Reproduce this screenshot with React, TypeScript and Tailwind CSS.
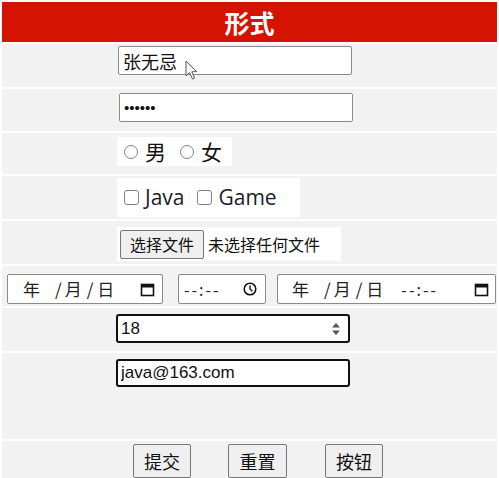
import { ChangeEvent, useState } from "react";

const cjk = '"Noto Sans CJK SC", "Liberation Sans", sans-serif';

function CalendarIcon() {
  return (
    <svg width="15" height="15" viewBox="0 0 15 15" className="shrink-0">
      <rect x="1.5" y="2.5" width="12" height="11" fill="none" stroke="#111" strokeWidth="1.6" />
      <rect x="1.5" y="2.5" width="12" height="3" fill="#111" />
    </svg>
  );
}

function ClockIcon() {
  return (
    <svg width="14" height="14" viewBox="0 0 14 14" className="shrink-0">
      <circle cx="7" cy="7" r="5.8" fill="none" stroke="#111" strokeWidth="1.5" />
      <path d="M7 3.6 V7 L9.4 9.2" fill="none" stroke="#111" strokeWidth="1.4" />
    </svg>
  );
}

function DateParts() {
  return (
    <span className="flex items-center text-[17px] text-[#222]">
      <span>年</span>
      <span className="ml-[15px]">/</span>
      <span className="ml-[3px]">月</span>
      <span className="ml-[5px]">/</span>
      <span className="ml-[4px]">日</span>
    </span>
  );
}

export default function App() {
  const [name, setName] = useState("张无忌");
  const [pwd, setPwd] = useState("123456");
  const [age, setAge] = useState("18");
  const [email, setEmail] = useState("java@163.com");

  const onText = (set: (v: string) => void) => (e: ChangeEvent<HTMLInputElement>) =>
    set(e.target.value);

  return (
    <div
      className="min-h-[478px] bg-white px-[2px] pt-[2px] flex flex-col gap-[2px] overflow-hidden"
      style={{ fontFamily: cjk }}
    >
      <div className="h-[40px] bg-[#d41300] flex items-center justify-center">
        <h1 className="text-[25px] font-bold text-white leading-none">形式</h1>
      </div>

      {/* name */}
      <div className="h-[43px] bg-[#f2f2f2] pl-[116px] pt-[2px] relative">
        <input
          type="text"
          value={name}
          onChange={onText(setName)}
          className="w-[234px] h-[29px] bg-white border border-[#8a8a8a] rounded-[2px] px-[4px] text-[18px] text-[#111] outline-none"
        />
        <svg width="13" height="20" viewBox="0 0 13 20" className="absolute left-[183px] top-[16px]">
          <path d="M1 1 V16 L4.5 12.5 L7.5 19 L9.6 18 L6.8 11.8 L11.6 11.6 Z" fill="#fff" stroke="#555" strokeWidth="1" />
        </svg>
      </div>

      {/* password */}
      <div className="h-[42px] bg-[#f2f2f2] pl-[117px] pt-[4px]">
        <input
          type="password"
          value={pwd}
          onChange={onText(setPwd)}
          className="w-[234px] h-[29px] bg-white border border-[#8a8a8a] rounded-[2px] px-[4px] text-[15px] text-[#111] outline-none"
          style={{ fontFamily: '"Liberation Sans", sans-serif' }}
        />
      </div>

      {/* gender */}
      <div className="h-[41px] bg-[#f2f2f2] pl-[115px] pt-[4px]">
        <div className="inline-flex items-center h-[29px] w-[115px] bg-white pl-[7px] text-[21px] text-[#111]">
          <label className="flex items-center">
            <input
              type="radio"
              name="sex"
              className="appearance-none shrink-0 w-[14px] h-[14px] m-0 mr-[7px] rounded-full border border-[#808080] bg-white checked:border-[4px] checked:border-[#333]"
            />
            男
          </label>
          <label className="flex items-center ml-[14px]">
            <input
              type="radio"
              name="sex"
              className="appearance-none shrink-0 w-[14px] h-[14px] m-0 mr-[7px] rounded-full border border-[#808080] bg-white checked:border-[4px] checked:border-[#333]"
            />
            女
          </label>
        </div>
      </div>

      {/* hobby */}
      <div className="h-[43px] bg-[#f2f2f2] pl-[115px] pt-[2px]">
        <div
          className="inline-flex items-center h-[39px] w-[183px] bg-white pl-[7px] text-[21px] text-[#1a1a2a]"
          style={{ fontFamily: '"Open Sans", "Noto Sans", sans-serif' }}
        >
          <label className="flex items-center">
            <input
              type="checkbox"
              className="appearance-none shrink-0 w-[15px] h-[15px] m-0 mr-[6px] rounded-[3px] border border-[#808080] bg-white checked:bg-[#333]"
            />
            Java
          </label>
          <label className="flex items-center ml-[13px]">
            <input
              type="checkbox"
              className="appearance-none shrink-0 w-[15px] h-[15px] m-0 mr-[6px] rounded-[3px] border border-[#808080] bg-white checked:bg-[#333]"
            />
            Game
          </label>
        </div>
      </div>

      {/* file */}
      <div className="h-[43px] bg-[#f2f2f2] pl-[115px] pt-[6px]">
        <div className="inline-flex items-center h-[34px] w-[224px] bg-white pl-[3px] text-[16px] text-[#111]">
          <button
            type="button"
            className="h-[29px] px-[9px] bg-[#efefef] border border-[#767676] rounded-[2px] text-[16px] leading-none"
          >
            选择文件
          </button>
          <span className="ml-[4px]">未选择任何文件</span>
        </div>
      </div>

      {/* date & time */}
      <div className="h-[40px] bg-[#f2f2f2] flex items-start pt-[8px] pl-[5px] gap-[16px]">
        <div className="w-[156px] h-[30px] bg-white border border-[#8a8a8a] rounded-[2px] flex items-center pl-[15px] pr-[7px] justify-between">
          <DateParts />
          <CalendarIcon />
        </div>
        <div className="w-[88px] h-[30px] bg-white border border-[#8a8a8a] rounded-[2px] flex items-center pl-[5px] pr-[8px] justify-between -ml-[1px] text-[16px] text-[#222]">
          <span className="tracking-[2px]">--:--</span>
          <ClockIcon />
        </div>
        <div className="w-[219px] h-[30px] bg-white border border-[#8a8a8a] rounded-[2px] flex items-center pl-[14px] pr-[6px] -ml-[5px]">
          <DateParts />
          <span className="ml-[18px] text-[16px] text-[#222] tracking-[2px]">--:--</span>
          <span className="flex-1" />
          <CalendarIcon />
        </div>
      </div>

      {/* age */}
      <div className="h-[43px] bg-[#f2f2f2] pl-[114px] pt-[6px]">
        <div className="relative w-[234px] h-[29px]">
          <input
            type="text"
            value={age}
            onChange={onText(setAge)}
            className="w-full h-full bg-white border-2 border-[#111] rounded-[3px] px-[3px] text-[17px] text-[#111] outline-none"
            style={{ fontFamily: '"Liberation Sans", sans-serif' }}
          />
          <svg width="10" height="14" viewBox="0 0 10 14" className="absolute right-[9px] top-[8px]">
            <path d="M1 5.5 L5 1 L9 5.5 Z M1 8.5 L5 13 L9 8.5 Z" fill="#555" />
          </svg>
        </div>
      </div>

      {/* email */}
      <div className="h-[86px] bg-[#f2f2f2] pl-[114px] pt-[6px]">
        <input
          type="email"
          value={email}
          onChange={onText(setEmail)}
          className="w-[234px] h-[28px] bg-white border-2 border-[#111] rounded-[3px] px-[3px] text-[17px] text-[#111] outline-none"
          style={{ fontFamily: '"Liberation Sans", sans-serif' }}
        />
      </div>

      {/* buttons */}
      <div className="h-[38px] bg-[#f2f2f2] flex items-start pt-[3px] pl-[131px]">
        <button type="submit" className="w-[58px] h-[34px] bg-[#efefef] border border-[#767676] rounded-[2px] text-[18px] text-[#111]">
          提交
        </button>
        <button type="reset" className="w-[59px] h-[34px] ml-[37px] bg-[#efefef] border border-[#767676] rounded-[2px] text-[18px] text-[#111]">
          重置
        </button>
        <button type="button" className="w-[58px] h-[34px] ml-[38px] bg-[#efefef] border border-[#767676] rounded-[2px] text-[18px] text-[#111]">
          按钮
        </button>
      </div>
    </div>
  );
}
